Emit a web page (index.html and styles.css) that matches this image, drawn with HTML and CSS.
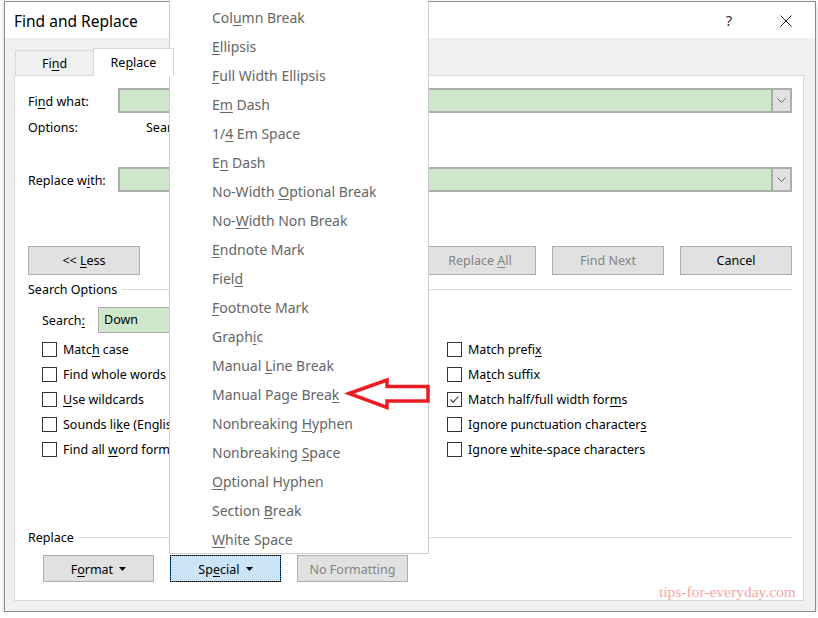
FILE: index.html
```html
<!DOCTYPE html>
<html lang="en">
<head>
    <meta charset="UTF-8">
    <title>Find and Replace</title>
    <link rel="stylesheet" href="styles.css">
</head>
<body>

    <div class="window">
        <div class="titlebar">
            <span class="title">Find and Replace</span>
            <span class="help">?</span>
            <svg class="close" width="12" height="12" viewBox="0 0 12 12">
                <path d="M0.5 0.5 L11.5 11.5 M11.5 0.5 L0.5 11.5" stroke="#222" stroke-width="1" fill="none"/>
            </svg>
        </div>

        <div class="client">
            <div class="tabs">
                <div class="tab">Fi<u>n</u>d</div>
                <div class="tab active">Re<u>p</u>lace</div>
                <div class="tab"></div>
            </div>

            <div class="panel">
                <!-- find / replace fields -->
                <div class="field-row find-row">
                    <span class="field-label">Fi<u>n</u>d what:</span>
                    <div class="combo">
                        <div class="combo-btn">
                            <svg width="9" height="5" viewBox="0 0 9 5"><path d="M0.5 0.5 L4.5 4.5 L8.5 0.5" stroke="#606060" fill="none"/></svg>
                        </div>
                    </div>
                </div>
                <div class="options-row">
                    <span class="options-label">Options:</span>
                    <span>Search Down</span>
                </div>
                <div class="field-row replace-row">
                    <span class="field-label">Replace w<u>i</u>th:</span>
                    <div class="combo">
                        <div class="combo-btn">
                            <svg width="9" height="5" viewBox="0 0 9 5"><path d="M0.5 0.5 L4.5 4.5 L8.5 0.5" stroke="#606060" fill="none"/></svg>
                        </div>
                    </div>
                </div>

                <div class="actions">
                    <button class="btn">&lt;&lt; <u>L</u>ess</button>
                    <div class="action-group">
                        <button class="btn disabled"></button>
                        <button class="btn disabled">Replace <u>A</u>ll</button>
                        <button class="btn disabled">Find Next</button>
                        <button class="btn">Cancel</button>
                    </div>
                </div>

                <!-- search options -->
                <div class="section-head">Search Options</div>
                <div class="search-row">
                    <span class="search-label">Search<u>:</u></span>
                    <div class="select">Down</div>
                </div>

                <div class="checks">
                    <div class="check"><span class="box"></span><span>Matc<u>h</u> case</span></div>
                    <div class="check"><span class="box"></span><span>Match prefi<u>x</u></span></div>
                    <div class="check"><span class="box"></span><span>Find whole words onl<u>y</u></span></div>
                    <div class="check"><span class="box"></span><span>Ma<u>t</u>ch suffix</span></div>
                    <div class="check"><span class="box"></span><span><u>U</u>se wildcards</span></div>
                    <div class="check"><span class="box"><svg width="13" height="13" viewBox="0 0 13 13"><path d="M2.5 6.5 L5.2 9.2 L10.5 3.5" stroke="#333" stroke-width="1.1" fill="none"/></svg></span><span>Match half/full width for<u>m</u>s</span></div>
                    <div class="check"><span class="box"></span><span>Sounds li<u>k</u>e (English)</span></div>
                    <div class="check"><span class="box"></span><span>Ignore punctuation character<u>s</u></span></div>
                    <div class="check"><span class="box"></span><span>Find all <u>w</u>ord forms (English)</span></div>
                    <div class="check"><span class="box"></span><span>Ignore <u>w</u>hite-space characters</span></div>
                </div>

                <div class="section-head replace-head">Replace</div>
                <div class="bottom-buttons">
                    <button class="btn small">F<u>o</u>rmat <svg class="caret" width="7" height="4" viewBox="0 0 7 4"><path d="M0 0 H7 L3.5 4 Z" fill="#000"/></svg></button>
                    <button class="btn small focused">Sp<u>e</u>cial <svg class="caret" width="7" height="4" viewBox="0 0 7 4"><path d="M0 0 H7 L3.5 4 Z" fill="#000"/></svg></button>
                    <button class="btn small disabled">No Formatting</button>
                </div>
            </div>
        </div>
    </div>

    <!-- Special menu, open over the dialog -->
    <div class="menu">
        <div class="menu-item">Col<u>u</u>mn Break</div>
        <div class="menu-item"><u>E</u>llipsis</div>
        <div class="menu-item"><u>F</u>ull Width Ellipsis</div>
        <div class="menu-item">E<u>m</u> Dash</div>
        <div class="menu-item">1/<u>4</u> Em Space</div>
        <div class="menu-item">E<u>n</u> Dash</div>
        <div class="menu-item">No-Width <u>O</u>ptional Break</div>
        <div class="menu-item">No-<u>W</u>idth Non Break</div>
        <div class="menu-item"><u>E</u>ndnote Mark</div>
        <div class="menu-item">Fiel<u>d</u></div>
        <div class="menu-item"><u>F</u>ootnote Mark</div>
        <div class="menu-item">Graph<u>i</u>c</div>
        <div class="menu-item">Manual <u>L</u>ine Break</div>
        <div class="menu-item">Manual Page Brea<u>k</u></div>
        <div class="menu-item">Nonbreaking <u>H</u>yphen</div>
        <div class="menu-item">Nonbreaking <u>S</u>pace</div>
        <div class="menu-item"><u>O</u>ptional Hyphen</div>
        <div class="menu-item">Section <u>B</u>reak</div>
        <div class="menu-item"><u>W</u>hite Space</div>
    </div>

    <svg class="arrow" width="90" height="36" viewBox="0 0 90 36">
        <path d="M5 17.5 L43 4 L43 10.5 L84 10.5 L84 25 L43 25 L43 31.5 Z" stroke="#ec1c24" stroke-width="3.5" fill="none" stroke-linejoin="miter"/>
    </svg>

    <div class="watermark">tips-for-everyday.com</div>

</body>
</html>
```

FILE: styles.css
```css
* {
    box-sizing: border-box;
}
body {
    margin: 0;
    background: #fff;
    font-family: "Noto Sans", "Open Sans", sans-serif;
    font-size: 12.5px;
    color: #000;
}
u {
    text-underline-offset: 2px;
}
.window {
    width: 812px;
    height: 611px;
    margin: 1px 0 0 4px;
    border: 1px solid #8a8a8a;
    box-shadow: 0 2px 5px rgba(0, 0, 0, 0.18);
    display: flex;
    flex-direction: column;
}
.titlebar {
    height: 36px;
    background: #fff;
    display: flex;
    align-items: center;
}
.title {
    padding-left: 9px;
    font-size: 15.5px;
    margin-top: 1px;
}
.help {
    margin-left: auto;
    width: 20px;
    text-align: center;
    font-size: 15px;
    color: #333;
    margin-right: 41px;
}
.close {
    margin-right: 23px;
    margin-top: 2px;
}
.client {
    flex: 1;
    background: #f0f0f0;
    padding: 10px 11px 10px 9px;
}
.tabs {
    display: flex;
    align-items: flex-end;
    height: 27px;
    padding-left: 1px;
}
.tab {
    height: 25px;
    line-height: 25px;
    width: 79px;
    text-align: center;
    border: 1px solid #d9d9d9;
    border-bottom: none;
    background: #f0f0f0;
}
.tab.active {
    height: 28px;
    line-height: 27px;
    width: 81px;
    background: #fff;
    margin-bottom: -1px;
    position: relative;
    z-index: 1;
    margin-left: -1px;
}
.panel {
    height: 526px;
    background: #fff;
    border: 1px solid #d9d9d9;
    padding: 0 11px 0 13px;
}
.field-row {
    display: flex;
    align-items: center;
    height: 25px;
}
.find-row {
    margin-top: 12px;
}
.replace-row {
    margin-top: 31px;
}
.field-label {
    width: 90px;
    flex: none;
    padding-top: 1px;
}
.combo {
    flex: 1;
    height: 25px;
    display: flex;
    justify-content: flex-end;
    background: #cfe8cc;
    border: 2px solid #adadad;
}
.combo-btn {
    width: 19px;
    background: #e1e1e1;
    border-left: 2px solid #adadad;
    display: flex;
    align-items: center;
    justify-content: center;
}
.options-row {
    display: flex;
    height: 16px;
    line-height: 16px;
    margin-top: 7px;
    white-space: nowrap;
}
.options-label {
    width: 118px;
}
.actions {
    display: flex;
    justify-content: space-between;
    margin-top: 54px;
    height: 29px;
}
.action-group {
    display: flex;
    gap: 16px;
}
.btn {
    width: 112px;
    height: 29px;
    font-family: inherit;
    font-size: 12.5px;
    color: #000;
    background: #e1e1e1;
    border: 1px solid #adadad;
    padding: 0;
}
.btn.disabled {
    color: #838383;
}
.section-head {
    display: flex;
    align-items: center;
    height: 16px;
    margin-top: 6px;
}
.section-head::after {
    content: "";
    flex: 1;
    height: 1px;
    background: #dcdcdc;
    margin-left: 5px;
}
.search-row {
    display: flex;
    align-items: center;
    height: 26px;
    margin-top: 10px;
    padding-left: 14px;
}
.search-label {
    width: 56px;
}
.select {
    width: 140px;
    height: 26px;
    line-height: 24px;
    padding-left: 5px;
    background: #cfe8cc;
    border: 1px solid #adadad;
}
.checks {
    display: grid;
    grid-template-columns: 405px 1fr;
    grid-auto-rows: 25px;
    margin-top: 4px;
    padding-left: 14px;
}
.check {
    display: flex;
    align-items: center;
    gap: 6px;
    white-space: nowrap;
}
.box {
    width: 15px;
    height: 15px;
    flex: none;
    border: 1px solid #333;
    background: #fff;
    display: flex;
    align-items: center;
    justify-content: center;
}
.replace-head {
    margin-top: 67px;
}
.bottom-buttons {
    display: flex;
    gap: 16px;
    margin-top: 10px;
    padding-left: 15px;
}
.btn.small {
    width: 111px;
    height: 27px;
    padding-top: 1px;
}
.caret {
    margin-left: 3px;
    vertical-align: middle;
    margin-bottom: 2px;
}
.btn.focused {
    border: 1px dotted #000;
    background: linear-gradient(#cce4f7, #cce4f7) padding-box, linear-gradient(#0078d7, #0078d7) border-box;
}
.menu {
    position: absolute;
    left: 169px;
    top: 0;
    width: 260px;
    height: 554px;
    background: #fff;
    border: 1px solid #cccccc;
    border-top: none;
    padding-top: 3px;
}
.menu-item {
    height: 29px;
    line-height: 29px;
    padding-left: 42px;
    font-size: 14px;
    color: #666;
}
.arrow {
    position: absolute;
    left: 344px;
    top: 376px;
}
.watermark {
    position: absolute;
    left: 659px;
    top: 583px;
    font-family: "Liberation Serif", serif;
    font-size: 15.5px;
    color: #f6a5a5;
}
```
